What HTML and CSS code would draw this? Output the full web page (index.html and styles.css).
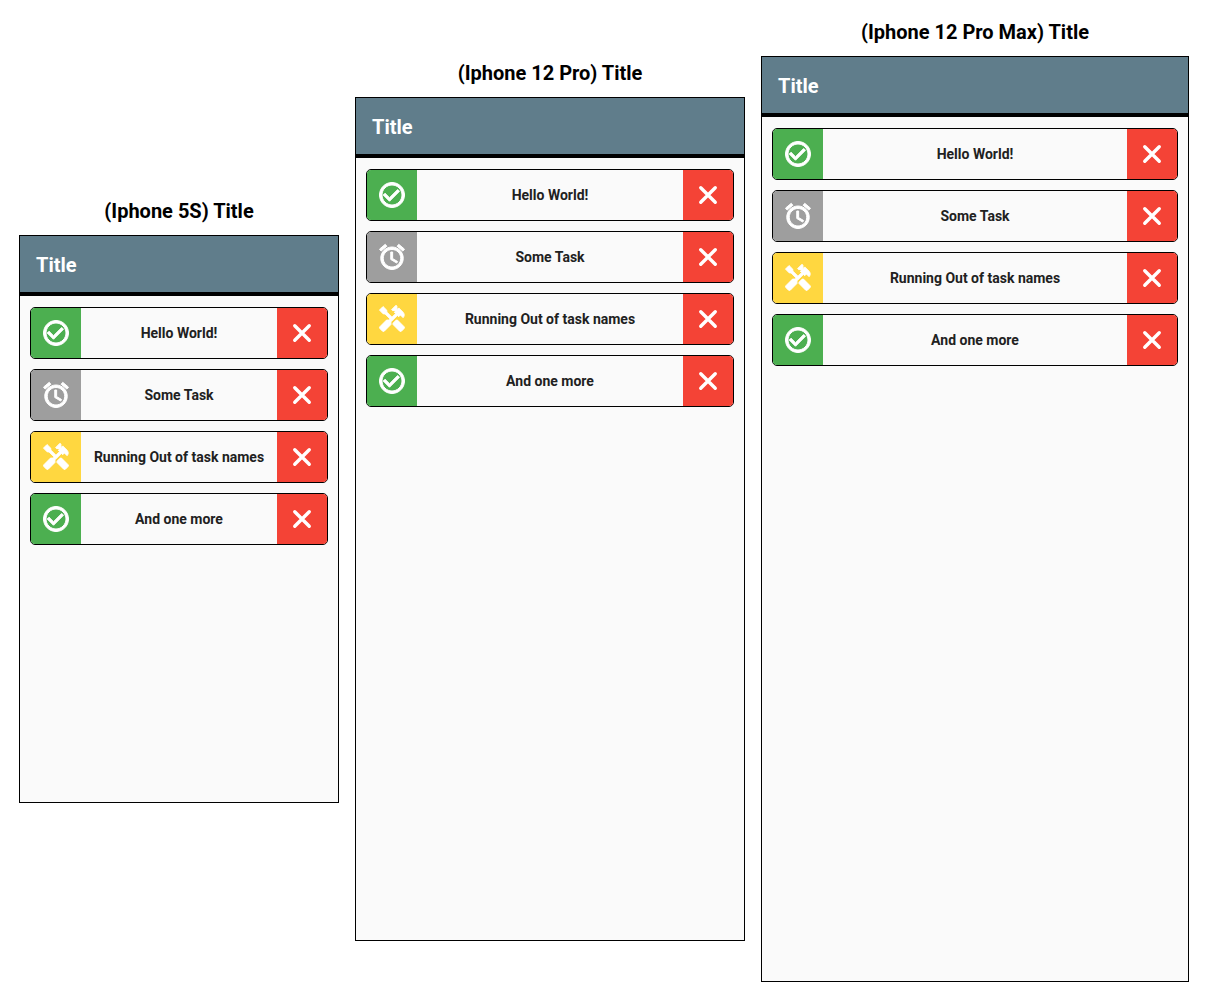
FILE: index.html
```html
<!DOCTYPE html>
<html lang="en">
<head>
<meta charset="utf-8">
<meta name="viewport" content="width=device-width, initial-scale=1">
<title>Title</title>
<link rel="stylesheet" href="styles.css">
</head>
<body>
<svg class="sprite" aria-hidden="true">
  <symbol id="done" viewBox="0 0 24 24"><path d="M16.59 7.58L10 14.17l-3.59-3.58L5 12l5 5 8-8zM12 2C6.48 2 2 6.48 2 12s4.48 10 10 10 10-4.48 10-10S17.52 2 12 2zm0 18c-4.42 0-8-3.58-8-8s3.58-8 8-8 8 3.58 8 8-3.58 8-8 8z"/></symbol>
  <symbol id="alarm" viewBox="0 0 24 24"><path d="M22 5.72l-4.6-3.86-1.29 1.53 4.6 3.86L22 5.72zM7.88 3.39L6.6 1.86 2 5.71l1.29 1.53 4.59-3.85zM12.5 8H11v6l4.75 2.85.75-1.23-4-2.37V8zM12 4c-4.97 0-9 4.03-9 9s4.02 9 9 9c4.97 0 9-4.03 9-9s-4.03-9-9-9zm0 16c-3.87 0-7-3.13-7-7s3.13-7 7-7 7 3.13 7 7-3.13 7-7 7z"/></symbol>
  <symbol id="tools" viewBox="0 0 24 24"><path d="M21.67 18.17l-5.3-5.3h-.99l-2.54 2.54v.99l5.3 5.3c.39.39 1.02.39 1.41 0l2.12-2.12c.39-.38.39-1.02 0-1.41z"/><path d="M17.34 10.19l1.41-1.41 2.12 2.12c1.17-1.17 1.17-3.07 0-4.24l-3.54-3.54-1.41 1.41V1.71L15.22 1l-3.54 3.54.71.71h2.83l-1.41 1.41 1.06 1.06-2.89 2.89-4.13-4.13V5.06L4.83 2.04 2 4.87l3.03 3.03h1.41l4.13 4.13-.85.85H7.6l-5.3 5.3c-.39.39-.39 1.02 0 1.41l2.12 2.12c.39.39 1.02.39 1.41 0l5.3-5.3v-2.12l5.15-5.15 1.06 1.04z"/></symbol>
  <symbol id="close" viewBox="0 0 24 24"><path d="M6.2 6.2l11.6 11.6M17.8 6.2L6.2 17.8" fill="none" stroke-width="2.7" stroke-linecap="round"/></symbol>
</svg>
<main class="devices">
  <section class="device">
    <h2 class="device-name">(Iphone 5S) Title</h2>
    <div class="screen screen-small">
      <header class="app-bar"><h3 class="app-title">Title</h3></header>
      <ul class="tasks">
        <li class="task"><button class="action done" aria-label="Done"><svg class="icon"><use href="#done"/></svg></button><span class="name">Hello World!</span><button class="action remove" aria-label="Remove"><svg class="icon"><use href="#close"/></svg></button></li>
        <li class="task"><button class="action waiting" aria-label="Waiting"><svg class="icon"><use href="#alarm"/></svg></button><span class="name">Some Task</span><button class="action remove" aria-label="Remove"><svg class="icon"><use href="#close"/></svg></button></li>
        <li class="task"><button class="action working" aria-label="In progress"><svg class="icon"><use href="#tools"/></svg></button><span class="name">Running Out of task names</span><button class="action remove" aria-label="Remove"><svg class="icon"><use href="#close"/></svg></button></li>
        <li class="task"><button class="action done" aria-label="Done"><svg class="icon"><use href="#done"/></svg></button><span class="name">And one more</span><button class="action remove" aria-label="Remove"><svg class="icon"><use href="#close"/></svg></button></li>
      </ul>
    </div>
  </section>
  <section class="device">
    <h2 class="device-name">(Iphone 12 Pro) Title</h2>
    <div class="screen screen-medium">
      <header class="app-bar"><h3 class="app-title">Title</h3></header>
      <ul class="tasks">
        <li class="task"><button class="action done" aria-label="Done"><svg class="icon"><use href="#done"/></svg></button><span class="name">Hello World!</span><button class="action remove" aria-label="Remove"><svg class="icon"><use href="#close"/></svg></button></li>
        <li class="task"><button class="action waiting" aria-label="Waiting"><svg class="icon"><use href="#alarm"/></svg></button><span class="name">Some Task</span><button class="action remove" aria-label="Remove"><svg class="icon"><use href="#close"/></svg></button></li>
        <li class="task"><button class="action working" aria-label="In progress"><svg class="icon"><use href="#tools"/></svg></button><span class="name">Running Out of task names</span><button class="action remove" aria-label="Remove"><svg class="icon"><use href="#close"/></svg></button></li>
        <li class="task"><button class="action done" aria-label="Done"><svg class="icon"><use href="#done"/></svg></button><span class="name">And one more</span><button class="action remove" aria-label="Remove"><svg class="icon"><use href="#close"/></svg></button></li>
      </ul>
    </div>
  </section>
  <section class="device">
    <h2 class="device-name">(Iphone 12 Pro Max) Title</h2>
    <div class="screen screen-large">
      <header class="app-bar"><h3 class="app-title">Title</h3></header>
      <ul class="tasks">
        <li class="task"><button class="action done" aria-label="Done"><svg class="icon"><use href="#done"/></svg></button><span class="name">Hello World!</span><button class="action remove" aria-label="Remove"><svg class="icon"><use href="#close"/></svg></button></li>
        <li class="task"><button class="action waiting" aria-label="Waiting"><svg class="icon"><use href="#alarm"/></svg></button><span class="name">Some Task</span><button class="action remove" aria-label="Remove"><svg class="icon"><use href="#close"/></svg></button></li>
        <li class="task"><button class="action working" aria-label="In progress"><svg class="icon"><use href="#tools"/></svg></button><span class="name">Running Out of task names</span><button class="action remove" aria-label="Remove"><svg class="icon"><use href="#close"/></svg></button></li>
        <li class="task"><button class="action done" aria-label="Done"><svg class="icon"><use href="#done"/></svg></button><span class="name">And one more</span><button class="action remove" aria-label="Remove"><svg class="icon"><use href="#close"/></svg></button></li>
      </ul>
    </div>
  </section>
</main>
</body>
</html>
```
FILE: styles.css
```css
* {
  box-sizing: border-box;
}

body {
  margin: 0;
  background: #fff;
  color: #000;
  font-family: Roboto, "Liberation Sans", sans-serif;
}

.sprite {
  display: none;
}

.devices {
  display: grid;
  grid-template-columns: 320fr 390fr 428fr;
  align-items: center;
  gap: 16px;
  min-height: 100vh;
  padding: 0 19px;
}

.device-name {
  margin: 0 0 10px;
  font-size: 20px;
  font-weight: 700;
  line-height: 28px;
  text-align: center;
}

.screen {
  border: 1px solid #000;
  background: #fafafa;
}

.screen-small {
  aspect-ratio: 320 / 568;
}

.screen-medium {
  aspect-ratio: 390 / 844;
}

.screen-large {
  aspect-ratio: 428 / 926;
}

.app-bar {
  padding: 17px 16px 15px;
  border-bottom: 4px solid #000;
  background: #607d8b;
  color: #fff;
}

.app-title {
  margin: 0;
  font-size: 20px;
  font-weight: 700;
  line-height: 24px;
}

.tasks {
  display: flex;
  flex-direction: column;
  gap: 10px;
  margin: 0;
  padding: 11px 10px;
  list-style: none;
}

.task {
  display: flex;
  align-items: stretch;
  min-height: 52px;
  border: 1px solid #000;
  border-radius: 5px;
  overflow: hidden;
}

.name {
  flex: 1;
  align-self: center;
  color: #212121;
  font-size: 14px;
  font-weight: 700;
  line-height: 20px;
  text-align: center;
}

.action {
  display: flex;
  flex: 0 0 50px;
  align-items: center;
  justify-content: center;
  padding: 0;
  border: 0;
  color: #fff;
  cursor: pointer;
}

.icon {
  width: 30px;
  height: 30px;
  fill: currentColor;
  stroke: currentColor;
  stroke-width: 0.8;
}

.done {
  background: #4caf50;
}

.waiting {
  background: #9e9e9e;
}

.working {
  background: #ffd740;
}

.remove {
  background: #f44336;
}
```
